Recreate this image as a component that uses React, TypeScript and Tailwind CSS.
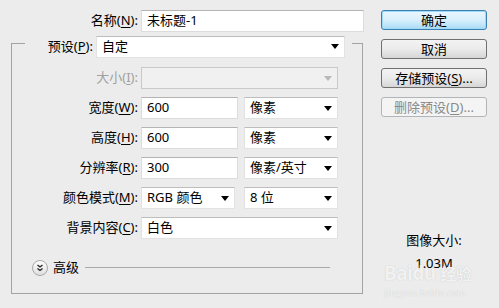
import React from "react";

const FONT = "font-['Noto_Sans','Noto_Sans_CJK_SC',sans-serif]";

function Arrow({ disabled }: { disabled?: boolean }) {
  return (
    <svg width="8" height="5" viewBox="0 0 8 5" className="shrink-0">
      <path d="M0 0 H8 L4 5 Z" fill={disabled ? "#b8b8b8" : "#000"} />
    </svg>
  );
}

function Label({ main, k, rest = "", disabled, w }: { main: string; k: string; rest?: string; disabled?: boolean; w: string }) {
  return (
    <div className={`${w} shrink-0 text-right whitespace-nowrap ${disabled ? "text-[#a0a0a0]" : "text-black"}`}>
      {main}(<span className="underline underline-offset-2">{k}</span>){rest}:
    </div>
  );
}

function Input({ value, w }: { value: string; w: string }) {
  return (
    <div className={`${w} h-[22px] bg-white border border-[#dcdcdc] border-t-[#b4b4b4] flex items-center pl-[5px] text-black`}>
      {value}
    </div>
  );
}

function Select({ value, w, disabled }: { value: string; w: string; disabled?: boolean }) {
  return (
    <div
      className={`${w} h-[22px] border flex items-center pl-[5px] pr-[5px] ${
        disabled ? "bg-[#f0f0f0] border-[#c9c9c9]" : "bg-white border-[#e2e2e2] border-t-[#bdbdbd]"
      }`}
    >
      <span className="flex-1 whitespace-nowrap">{value}</span>
      <Arrow disabled={disabled} />
    </div>
  );
}

function Button({ children, primary, disabled }: { children: React.ReactNode; primary?: boolean; disabled?: boolean }) {
  let cls = "";
  if (primary)
    cls = "border-[#3c7fb1] bg-linear-to-b from-[#eaf6fd] via-[#d9f0fc] to-[#a9dbf6] shadow-[inset_0_0_0_1px_#9fdaf6] text-black";
  else if (disabled) cls = "border-[#b2b5b8] bg-[#f4f4f4] text-[#8a8a8a]";
  else cls = "border-[#707070] bg-linear-to-b from-[#f3f3f3] via-[#ebebeb] to-[#d6d6d6] text-black";
  return (
    <div className={`w-[106px] h-[20px] rounded-[3px] border flex items-center justify-center leading-none ${cls}`}>
      {children}
    </div>
  );
}

export default function App() {
  return (
    <div className={`${FONT} w-[499px] h-[308px] bg-[#ececec] text-[13px] relative overflow-hidden`}>
      <div className="flex">
        {/* left */}
        <div className="w-[370px] pt-[10px] flex flex-col">
          <div className="flex items-center gap-[3px]">
            <Label main="名称" k="N" w="w-[138px]" />
            <Input value="未标题-1" w="w-[223px]" />
          </div>

          <div className="mt-[11px] ml-[11px] w-[352px] h-[251px] border-x border-b border-[#a3a3a3] flex flex-col">
            <div className="-mt-[8px] flex items-start">
              <div className="w-[13px] mt-[8px] border-t border-[#a3a3a3]" />
              <div className="h-[23px] flex items-center gap-[3px]">
                <Label main="预设" k="P" w="w-[68px]" />
                <Select value="自定" w="w-[249px]" />
              </div>
              <div className="flex-1 ml-[7px] mt-[8px] border-t border-[#a3a3a3]" />
            </div>

            <div className="mt-[9px] flex flex-col gap-[8px]">
              <div className="flex items-center gap-[3px]">
                <Label main="大小" k="I" w="w-[126px]" disabled />
                <Select value="" w="w-[197px]" disabled />
              </div>
              <div className="flex items-center">
                <Label main="宽度" k="W" w="w-[126px] mr-[3px]" />
                <Input value="600" w="w-[97px]" />
                <div className="w-[6px]" />
                <Select value="像素" w="w-[94px]" />
              </div>
              <div className="flex items-center">
                <Label main="高度" k="H" w="w-[126px] mr-[3px]" />
                <Input value="600" w="w-[97px]" />
                <div className="w-[6px]" />
                <Select value="像素" w="w-[94px]" />
              </div>
              <div className="flex items-center">
                <Label main="分辨率" k="R" w="w-[126px] mr-[3px]" />
                <Input value="300" w="w-[97px]" />
                <div className="w-[6px]" />
                <Select value="像素/英寸" w="w-[94px]" />
              </div>
              <div className="flex items-center">
                <Label main="颜色模式" k="M" w="w-[126px] mr-[3px]" />
                <Select value="RGB 颜色" w="w-[94px]" />
                <div className="w-[9px]" />
                <Select value="8 位" w="w-[94px]" />
              </div>
              <div className="flex items-center">
                <Label main="背景内容" k="C" w="w-[126px] mr-[3px]" />
                <Select value="白色" w="w-[197px]" />
              </div>
            </div>

            <div className="mt-[19px] ml-[20px] flex items-center">
              <svg width="16" height="16" viewBox="0 0 16 16" className="shrink-0">
                <defs>
                  <linearGradient id="cg" x1="0" y1="0" x2="0" y2="1">
                    <stop offset="0" stopColor="#ffffff" />
                    <stop offset="1" stopColor="#dedede" />
                  </linearGradient>
                </defs>
                <circle cx="8" cy="8" r="7.5" fill="url(#cg)" stroke="#a8a8a8" />
                <path d="M5.5 5 L8 7 L10.5 5 M5.5 8.5 L8 10.5 L10.5 8.5" fill="none" stroke="#222" strokeWidth="1.3" />
              </svg>
              <span className="ml-[5px] text-black">高级</span>
              <div className="ml-[6px] w-[245px] border-t border-[#a8a8a8]" />
            </div>
          </div>
        </div>

        {/* right */}
        <div className="ml-[11px] pt-[10px] flex flex-col gap-[9px]">
          <Button primary>确定</Button>
          <Button>取消</Button>
          <Button>
            存储预设(<span className="underline underline-offset-2">S</span>)...
          </Button>
          <Button disabled>
            删除预设(<span className="underline underline-offset-2">D</span>)...
          </Button>
          <div className="mt-[108px] flex flex-col items-center w-[106px] text-black leading-none">
            <div>图像大小:</div>
            <div className="mt-[10px]">1.03M</div>
          </div>
        </div>
      </div>
      <div className="absolute left-[384px] top-[264px] w-[90px] flex flex-col items-start pointer-events-none leading-none whitespace-nowrap text-white/80 [text-shadow:0_0_1px_#b8b8b8]">
        <div className="text-[19px] font-bold tracking-tight">
          Baidu <span className="text-[16px]">经验</span>
        </div>
        <div className="mt-[4px] text-[11px] font-['Liberation_Serif',serif]">jingyan.baidu.com</div>
      </div>
    </div>
  );
}
